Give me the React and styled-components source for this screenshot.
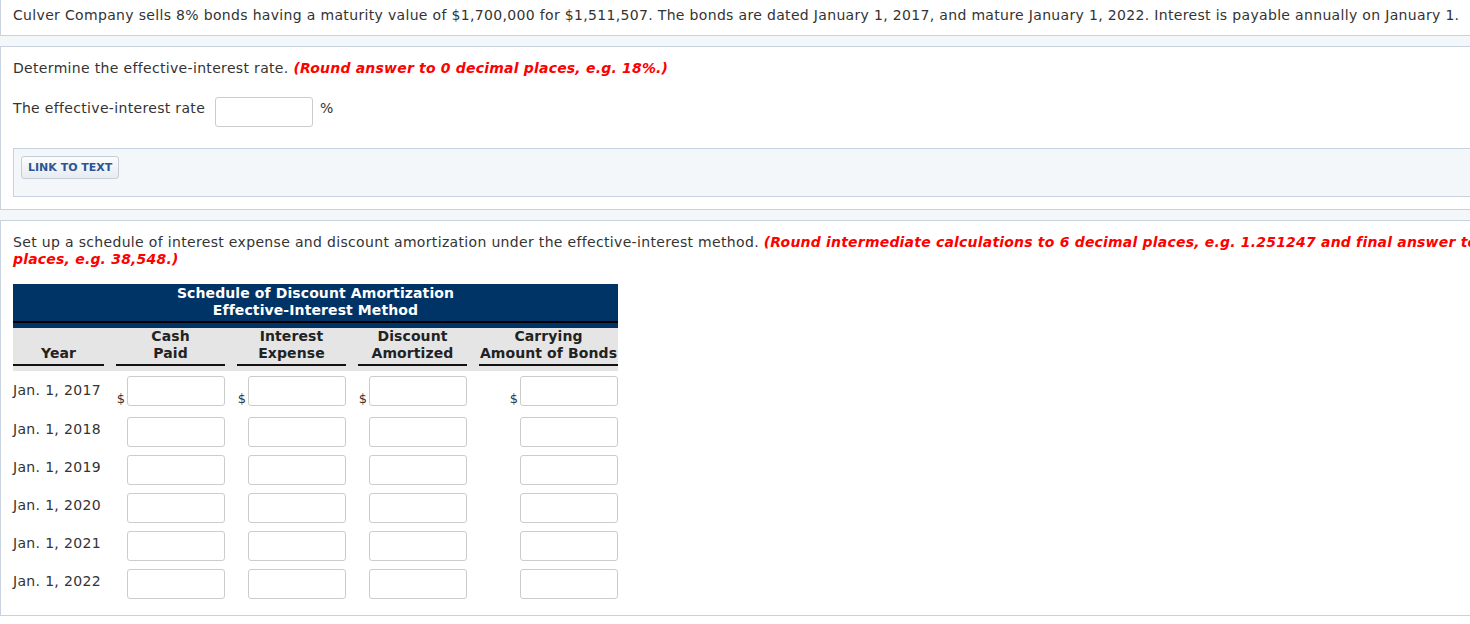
import React from 'react';
import styled, { createGlobalStyle } from 'styled-components';

const GlobalStyle = createGlobalStyle`
  html, body {
    margin: 0;
    padding: 0;
    overflow: hidden;
    background: #fff;
  }
  body {
    font-family: 'DejaVu Sans', Verdana, sans-serif;
    color: #333;
    letter-spacing: 0.33px;
  }
`;

const Page = styled.div`
  width: 1540px;
  background-color: #f4f7fa;
`;

const Section = styled.div`
  background-color: #fff;
  border: 1px solid #c8d1de;
  border-top: ${(props) => (props.first ? 'none' : '1px solid #c8d1de')};
  margin-bottom: 10px;
  padding: ${(props) => (props.first ? '7px 12px 11px' : '13px 12px 12px')};
  font-size: 14px;
  line-height: 17px;
`;

const Hint = styled.span`
  color: #f00;
  font-weight: bold;
  font-style: italic;
  letter-spacing: 0.2px;
`;

const AnswerRow = styled.div`
  display: flex;
  align-items: flex-start;
  margin-top: 20px;
  label {
    margin: 3px 10px 0 0;
  }
  span {
    margin: 3px 0 0 7px;
  }
`;

const Input = styled.input`
  box-sizing: border-box;
  width: 98px;
  height: 30px;
  border: 1px solid #ccc;
  border-radius: 3px;
  background: #fff;
  padding: 0 4px;
  font-family: inherit;
  font-size: 13px;
  outline: none;
`;

const LinkBox = styled.div`
  margin-top: 21px;
  background-color: #f4f7fa;
  border: 1px solid #c8d1de;
  padding: 7px 7px 17px;
`;

const LinkButton = styled.button`
  height: 23px;
  padding: 0 6px;
  border: 1px solid #c6ced8;
  border-radius: 3px;
  background: linear-gradient(#fbfcfd, #e7ecf1);
  color: #2c5593;
  font-family: 'DejaVu Sans', Verdana, sans-serif;
  font-size: 11px;
  font-weight: bold;
  letter-spacing: 0;
  cursor: pointer;
`;

const Table = styled.div`
  width: 605px;
  margin-top: 16px;
  font-size: 14px;
  line-height: 17px;
`;

const TitleBar = styled.div`
  background-color: #003366;
  padding-bottom: 5px;
`;

const Title = styled.div`
  color: #fff;
  font-weight: bold;
  text-align: center;
  letter-spacing: 0.1px;
  padding: 1px 0 2px;
  border-bottom: 2px solid #000;
`;

const Grid = styled.div`
  display: grid;
  grid-template-columns: 91px 109px 109px 109px 139px;
  column-gap: 12px;
`;

const HeadRow = styled(Grid)`
  background-color: #e5e5e5;
  padding: 0 0 5px;
`;

const HeadCell = styled.div`
  display: flex;
  flex-direction: column;
  justify-content: flex-end;
  text-align: center;
  font-weight: bold;
  letter-spacing: 0.1px;
  white-space: nowrap;
  color: #222;
  padding-bottom: 2px;
  border-bottom: 2px solid #111;
`;

const Row = styled(Grid)`
  padding: ${(props) => (props.first ? '5px 0 7px' : '4px 0')};
`;

const DateLabel = styled.div`
  align-self: start;
  margin-top: ${(props) => (props.first ? '6px' : '4px')};
  white-space: nowrap;
`;

const Cell = styled.div`
  display: flex;
  justify-content: flex-end;
  align-items: flex-end;
  gap: 2px;
  span {
    font-size: 13px;
    line-height: 13px;
    letter-spacing: 0;
    margin-bottom: 1px;
  }
`;

const years = ['2017', '2018', '2019', '2020', '2021', '2022'];
const heads = [
  ['', 'Year'],
  ['Cash', 'Paid'],
  ['Interest', 'Expense'],
  ['Discount', 'Amortized'],
  ['Carrying', 'Amount of Bonds'],
];

const App = () => {
  return (
    <Page>
      <GlobalStyle />
      <Section first>
        Culver Company sells 8% bonds having a maturity value of $1,700,000 for $1,511,507. The bonds
        are dated January 1, 2017, and mature January 1, 2022. Interest is payable annually on January 1.
      </Section>

      <Section>
        <div>
          Determine the effective-interest rate. <Hint>(Round answer to 0 decimal places, e.g. 18%.)</Hint>
        </div>
        <AnswerRow>
          <label>The effective-interest rate</label>
          <Input />
          <span>%</span>
        </AnswerRow>
        <LinkBox>
          <LinkButton>LINK TO TEXT</LinkButton>
        </LinkBox>
      </Section>

      <Section>
        <div style={{ whiteSpace: 'nowrap' }}>
          Set up a schedule of interest expense and discount amortization under the effective-interest
          method.{' '}
          <Hint>
            (Round intermediate calculations to 6 decimal places, e.g. 1.251247 and final answer to 0
            decimal
            <br />
            places, e.g. 38,548.)
          </Hint>
        </div>
        <Table>
          <TitleBar>
            <Title>
              Schedule of Discount Amortization
              <br />
              Effective-Interest Method
            </Title>
          </TitleBar>
          <HeadRow>
            {heads.map(([a, b]) => (
              <HeadCell key={b}>
                {a && <div>{a}</div>}
                <div>{b}</div>
              </HeadCell>
            ))}
          </HeadRow>
          {years.map((y, i) => (
            <Row key={y} first={i === 0}>
              <DateLabel first={i === 0}>Jan. 1, {y}</DateLabel>
              {[0, 1, 2, 3].map((c) => (
                <Cell key={c}>
                  {i === 0 && <span>$</span>}
                  <Input />
                </Cell>
              ))}
            </Row>
          ))}
        </Table>
      </Section>
    </Page>
  );
};

export default App;
